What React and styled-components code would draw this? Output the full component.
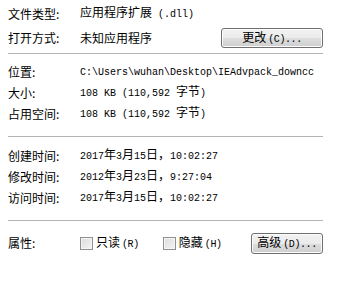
import React from 'react'
import styled, { createGlobalStyle } from 'styled-components'

const GlobalStyle = createGlobalStyle`
  html, body {
    margin: 0;
    padding: 0;
    background: #ffffff;
  }
  body {
    font-family: "Noto Sans CJK SC", "Liberation Sans", sans-serif;
    font-size: 12px;
    color: #000;
  }
`

const Panel = styled.div`
  width: 337px;
  height: 288px;
  box-sizing: border-box;
  padding: 3px 14px 0 8px;
  background: #fff;
`

const Row = styled.div`
  display: flex;
  align-items: center;
  height: ${(p) => p.h || 21}px;
  margin-top: ${(p) => p.mt || 0}px;
  white-space: pre;
`

const Label = styled.div`
  width: 72px;
  flex: none;
  line-height: 14px;
`

const Value = styled.div`
  flex: 1;
  display: flex;
  align-items: center;
  line-height: 14px;
`

const Text = styled.span`
  white-space: pre;
`

const Latin = styled.span`
  font-family: "Liberation Mono", monospace;
  font-size: 10px;
`

const Separator = styled.div`
  height: 1px;
  background: #b4b4b4;
  margin-top: ${(p) => p.mt || 0}px;
`

const Button = styled.button`
  margin-left: auto;
  width: ${(p) => p.w}px;
  height: ${(p) => p.h || 20}px;
  padding: 0;
  border: 1px solid #707070;
  border-radius: 3px;
  background: linear-gradient(to bottom, #f2f2f2 0%, #ebebeb 50%, #dddddd 51%, #cfcfcf 100%);
  box-shadow: inset 0 0 0 1px #fcfcfc;
  font-family: "Noto Sans CJK SC", sans-serif;
  font-size: 12px;
  color: #000;
  line-height: 14px;
  text-align: center;
`

const Check = styled.label`
  display: flex;
  align-items: center;
  margin-right: ${(p) => p.mr || 0}px;
`

const Box = styled.span`
  width: 11px;
  height: 11px;
  border: 1px solid #8e8f8f;
  background: linear-gradient(135deg, #dcdcdc 0%, #f4f4f4 100%);
  box-shadow: inset 0 0 0 1px #f6f6f6;
  margin-right: 3px;
  flex: none;
`

const Small = styled.span`
  font-family: "Liberation Mono", monospace;
  font-size: 10px;
  letter-spacing: -0.4px;
  margin-left: 2px;
`

// split text so that ascii runs use the narrow mono face, like SimSun half-width
const Mixed = ({ text }) => (
  <Text>
    {text
      .split(/([\x20-\x7e]+)/)
      .filter(Boolean)
      .map((s, i) =>
        /^[\x20-\x7e]+$/.test(s) ? <Latin key={i}>{s}</Latin> : <span key={i}>{s}</span>
      )}
  </Text>
)

const Field = ({ label, value, mt }) => (
  <Row mt={mt}>
    <Label>{label}</Label>
    <Value>
      <Mixed text={value} />
    </Value>
  </Row>
)

export default function App() {
  return (
    <>
      <GlobalStyle />
      <Panel>
        <Field label="文件类型:" value="应用程序扩展 (.dll)" />
        <Row h={22} mt={3}>
          <Label>打开方式:</Label>
          <Value>
            <Text>未知应用程序</Text>
            <Button w={102}>
              更改<Small>(C)...</Small>
            </Button>
          </Value>
        </Row>
        <Separator mt={4} />

        <Field mt={7} label="位置:" value="C:\Users\wuhan\Desktop\IEAdvpack_downcc" />
        <Field label="大小:" value="108 KB (110,592 字节)" />
        <Field label="占用空间:" value="108 KB (110,592 字节)" />
        <Separator mt={12} />

        <Field mt={8} label="创建时间:" value="2017年3月15日，10:02:27" />
        <Field label="修改时间:" value="2012年3月23日，9:27:04" />
        <Field label="访问时间:" value="2017年3月15日，10:02:27" />
        <Separator mt={12} />

        <Row h={22} mt={11}>
          <Label>属性:</Label>
          <Value>
            <Check mr={24}>
              <Box />
              <Text>只读<Small>(R)</Small></Text>
            </Check>
            <Check>
              <Box />
              <Text>隐藏<Small>(H)</Small></Text>
            </Check>
            <Button w={72} h={21}>
              高级<Small>(D)...</Small>
            </Button>
          </Value>
        </Row>
      </Panel>
    </>
  )
}
